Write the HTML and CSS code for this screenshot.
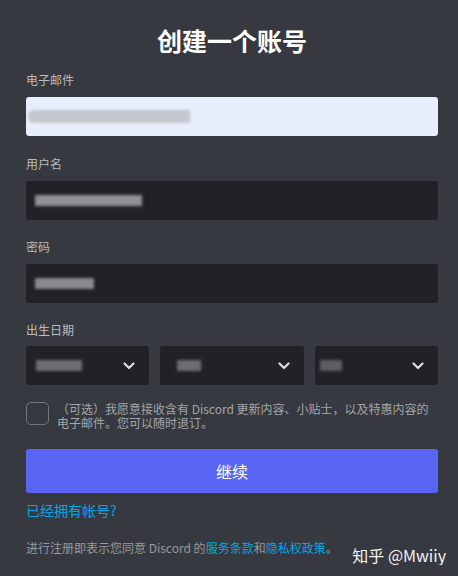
FILE: index.html
```html
<!DOCTYPE html>
<html lang="zh-CN">
<head>
<meta charset="UTF-8">
<meta name="viewport" content="width=device-width, initial-scale=1.0">
<title>创建一个账号</title>
<link rel="stylesheet" href="styles.css">
</head>
<body>
  <div class="register">
    <h2>创建一个账号</h2>

    <label class="field-label">电子邮件</label>
    <div class="input input-light">
      <span class="blur blur-email"></span>
    </div>

    <label class="field-label">用户名</label>
    <div class="input">
      <span class="blur blur-user"></span>
    </div>

    <label class="field-label">密码</label>
    <div class="input">
      <span class="blur blur-pass"></span>
    </div>

    <label class="field-label label-date">出生日期</label>
    <div class="date-row">
      <div class="select">
        <span class="blur blur-year"></span>
        <svg class="chevron" width="12" height="8" viewBox="0 0 12 8"><path d="M1.5 1.5 L6 6 L10.5 1.5" fill="none" stroke="#dcddde" stroke-width="2.2" stroke-linecap="round" stroke-linejoin="round"/></svg>
      </div>
      <div class="select">
        <span class="blur blur-month"></span>
        <svg class="chevron" width="12" height="8" viewBox="0 0 12 8"><path d="M1.5 1.5 L6 6 L10.5 1.5" fill="none" stroke="#dcddde" stroke-width="2.2" stroke-linecap="round" stroke-linejoin="round"/></svg>
      </div>
      <div class="select">
        <span class="blur blur-day"></span>
        <svg class="chevron" width="12" height="8" viewBox="0 0 12 8"><path d="M1.5 1.5 L6 6 L10.5 1.5" fill="none" stroke="#dcddde" stroke-width="2.2" stroke-linecap="round" stroke-linejoin="round"/></svg>
      </div>
    </div>

    <div class="optin">
      <span class="checkbox"></span>
      <p>（可选）我愿意接收含有 Discord 更新内容、小贴士，以及特惠内容的电子邮件。您可以随时退订。</p>
    </div>

    <button type="button" class="btn-continue">继续</button>

    <a class="login-link" href="#">已经拥有帐号?</a>

    <div class="footer">
      <p>进行注册即表示您同意 Discord 的<a href="#">服务条款</a>和<a href="#">隐私权政策</a>。</p>
      <span class="watermark">知乎 @Mwiiy</span>
    </div>
  </div>
</body>
</html>
```

FILE: styles.css
```css
body {
  margin: 0;
  padding: 0;
  background-color: #36393f;
  font-family: "Noto Sans CJK SC", "Noto Sans", sans-serif;
  color: #dcddde;
}

.register {
  display: flex;
  flex-direction: column;
  padding: 25px 20px 0 26px;
}

h2 {
  margin: 0 0 17px 0;
  text-align: center;
  color: #ffffff;
  font-size: 25px;
  line-height: 30px;
  font-weight: bold;
}

.field-label {
  display: block;
  font-size: 12px;
  line-height: 16px;
  color: #b9bbbe;
  margin-bottom: 9px;
}

.label-date {
  margin-bottom: 8px;
}

.input {
  display: flex;
  align-items: center;
  height: 39px;
  margin-bottom: 19px;
  background-color: #202225;
  border-radius: 3px;
  padding-left: 9px;
  overflow: hidden;
}

.input-light {
  background-color: #e8eefb;
  padding-left: 0;
  margin-bottom: 20px;
}

/* blurred values, like the screenshot */
.blur {
  display: block;
  height: 11px;
  filter: blur(1.5px);
}

.blur-email {
  width: 162px;
  height: 13px;
  margin-left: 2px;
  background-color: #c3c7cf;
  border-radius: 6px 0 0 6px;
}

.blur-user {
  width: 107px;
  background-color: #8f9195;
}

.blur-pass {
  width: 59px;
  background-color: #88898d;
}

.date-row {
  display: grid;
  grid-template-columns: 123fr 144fr 123fr;
  gap: 11px;
  margin-bottom: 17px;
}

.select {
  display: flex;
  align-items: center;
  justify-content: space-between;
  height: 39px;
  background-color: #202225;
  border-radius: 3px;
  padding: 0 14px 0 10px;
}

.blur-year {
  width: 46px;
  background-color: #6c6e72;
}

.blur-month {
  width: 24px;
  margin-left: 7px;
  background-color: #6c6e72;
}

.blur-day {
  width: 22px;
  margin-left: -5px;
  background-color: #5c5e62;
}

.chevron {
  display: block;
}

.optin {
  display: flex;
  align-items: flex-start;
  gap: 8px;
  margin-bottom: 19px;
}

.checkbox {
  flex: none;
  width: 21px;
  height: 21px;
  border: 1.5px solid #72767d;
  border-radius: 5px;
}

.optin p {
  margin: 0;
  font-size: 12px;
  line-height: 14px;
  color: #a3a6aa;
}

.btn-continue {
  height: 44px;
  border: none;
  border-radius: 3px;
  background-color: #5865f2;
  color: #ffffff;
  font-family: inherit;
  font-size: 16px;
  cursor: pointer;
  margin-bottom: 8px;
}

.login-link {
  font-size: 14px;
  line-height: 18px;
  color: #00a8e8;
  text-decoration: none;
  align-self: flex-start;
  margin-bottom: 21px;
}

.footer {
  display: flex;
  align-items: flex-start;
  justify-content: space-between;
}

.footer p {
  margin: 0;
  font-size: 12px;
  line-height: 16px;
  color: #979a9f;
}

.footer a {
  color: #00a8e8;
  text-decoration: none;
}

.watermark {
  font-size: 16px;
  line-height: 20px;
  color: #f2f2f2;
  margin-top: 5px;
  margin-right: -8px;
}
```
